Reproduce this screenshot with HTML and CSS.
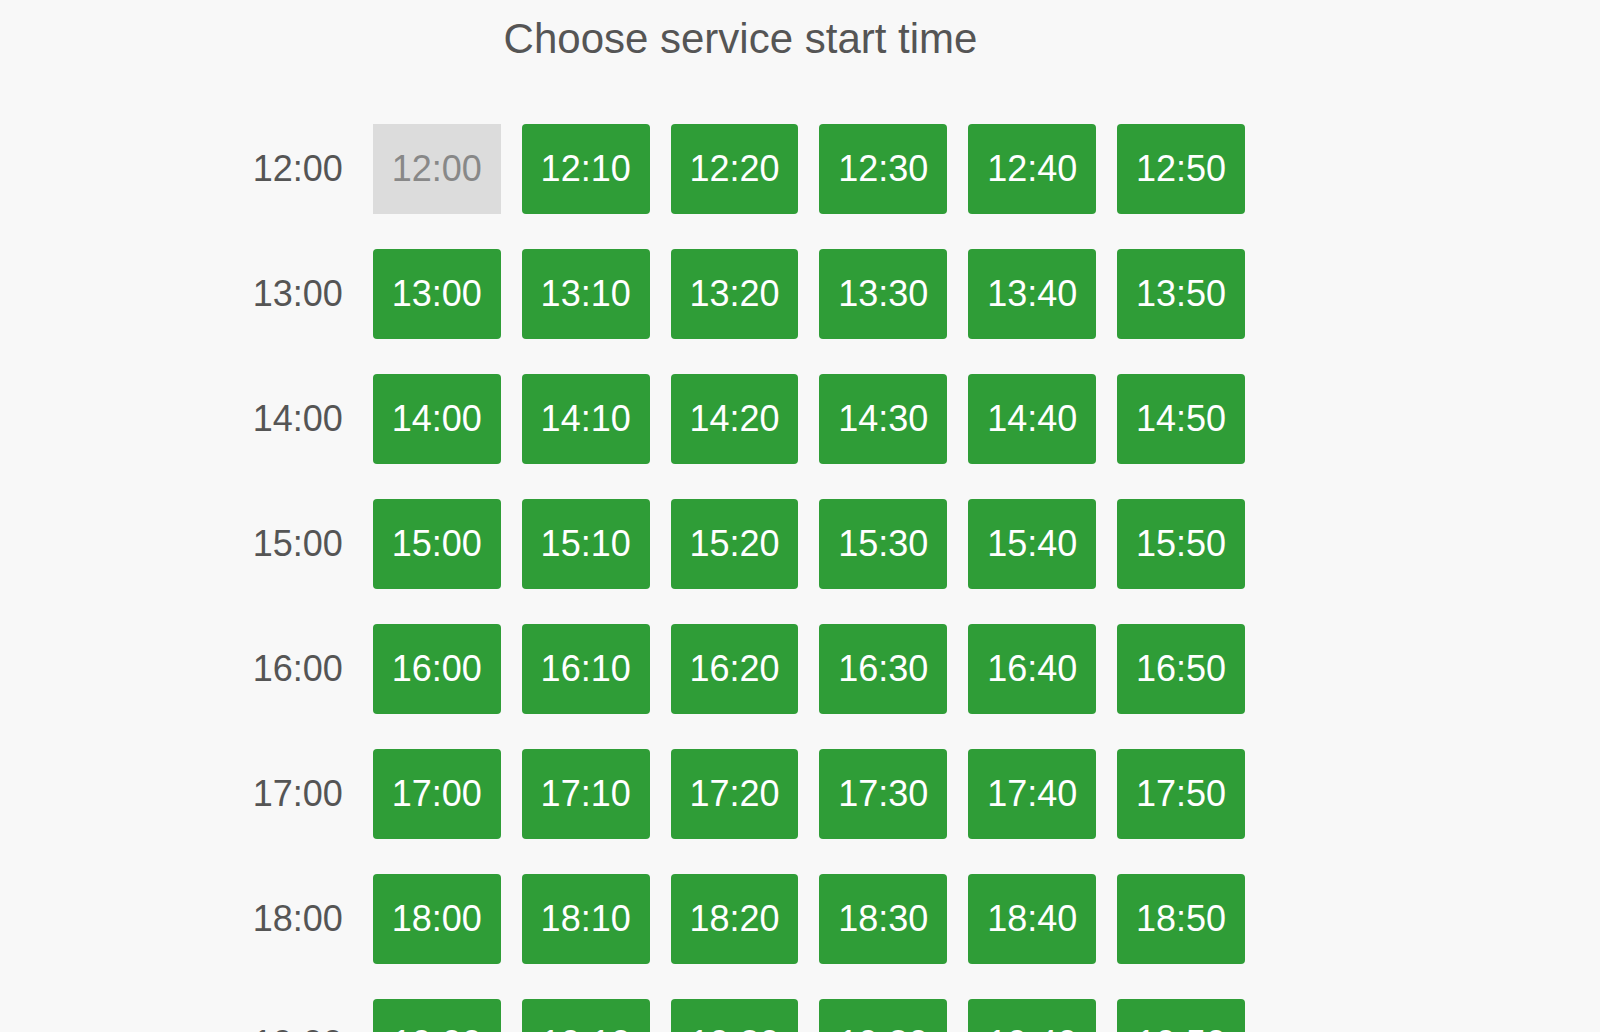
FILE: index.html
```html
<!DOCTYPE html>
<html>
<head>
    <title>Service start time</title>
    <link rel="stylesheet" href="styles.css">
</head>
<body>
    <div class="picker">
        <h1 class="picker-title">Choose service start time</h1>

        <div class="hour-row">
            <span class="hour-label">12:00</span>
            <button class="slot slot-busy">12:00</button>
            <button class="slot">12:10</button>
            <button class="slot">12:20</button>
            <button class="slot">12:30</button>
            <button class="slot">12:40</button>
            <button class="slot">12:50</button>
        </div>
        <div class="hour-row">
            <span class="hour-label">13:00</span>
            <button class="slot">13:00</button>
            <button class="slot">13:10</button>
            <button class="slot">13:20</button>
            <button class="slot">13:30</button>
            <button class="slot">13:40</button>
            <button class="slot">13:50</button>
        </div>
        <div class="hour-row">
            <span class="hour-label">14:00</span>
            <button class="slot">14:00</button>
            <button class="slot">14:10</button>
            <button class="slot">14:20</button>
            <button class="slot">14:30</button>
            <button class="slot">14:40</button>
            <button class="slot">14:50</button>
        </div>
        <div class="hour-row">
            <span class="hour-label">15:00</span>
            <button class="slot">15:00</button>
            <button class="slot">15:10</button>
            <button class="slot">15:20</button>
            <button class="slot">15:30</button>
            <button class="slot">15:40</button>
            <button class="slot">15:50</button>
        </div>
        <div class="hour-row">
            <span class="hour-label">16:00</span>
            <button class="slot">16:00</button>
            <button class="slot">16:10</button>
            <button class="slot">16:20</button>
            <button class="slot">16:30</button>
            <button class="slot">16:40</button>
            <button class="slot">16:50</button>
        </div>
        <div class="hour-row">
            <span class="hour-label">17:00</span>
            <button class="slot">17:00</button>
            <button class="slot">17:10</button>
            <button class="slot">17:20</button>
            <button class="slot">17:30</button>
            <button class="slot">17:40</button>
            <button class="slot">17:50</button>
        </div>
        <div class="hour-row">
            <span class="hour-label">18:00</span>
            <button class="slot">18:00</button>
            <button class="slot">18:10</button>
            <button class="slot">18:20</button>
            <button class="slot">18:30</button>
            <button class="slot">18:40</button>
            <button class="slot">18:50</button>
        </div>
        <div class="hour-row">
            <span class="hour-label">19:00</span>
            <button class="slot">19:00</button>
            <button class="slot">19:10</button>
            <button class="slot">19:20</button>
            <button class="slot">19:30</button>
            <button class="slot">19:40</button>
            <button class="slot">19:50</button>
        </div>
    </div>
</body>
</html>
```

FILE: styles.css
```css
body {
    margin: 0;
    background-color: #f8f8f8;
    font-family: "Liberation Sans", Arial, sans-serif;
    color: #555;
}
.picker {
    width: 995px;
    margin-left: 250px;
    padding-top: 15px;
}
.picker-title {
    margin: 0 0 61px 0;
    padding-right: 14px;
    font-size: 42px;
    font-weight: normal;
    line-height: 48px;
    text-align: center;
    color: #555;
}
.hour-row {
    display: flex;
    align-items: center;
    gap: 21px;
    margin-bottom: 35px;
}
.hour-label {
    width: 93px;
    margin-right: 9px;
    font-size: 36px;
    text-align: right;
    color: #555;
}
.slot {
    width: 128px;
    height: 90px;
    padding: 0;
    border: none;
    border-radius: 4px;
    background-color: #2f9d37;
    color: #fff;
    font-family: "Liberation Sans", Arial, sans-serif;
    font-size: 36px;
    cursor: pointer;
}
.slot:hover {
    background-color: #288a2f;
}
.slot-busy {
    background-color: #dcdcdc;
    color: #888;
    border-radius: 0;
    cursor: default;
}
.slot-busy:hover {
    background-color: #dcdcdc;
}
```
